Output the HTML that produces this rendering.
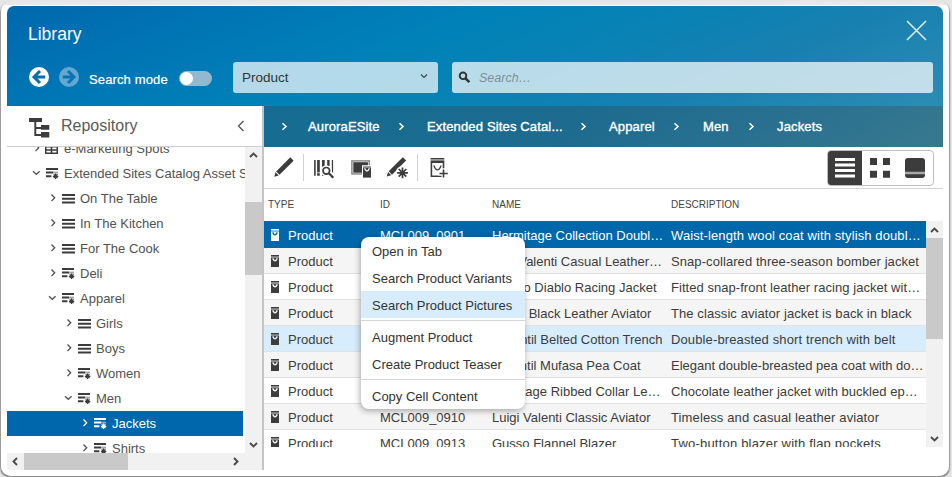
<!DOCTYPE html><html><head><meta charset="utf-8"><style>
*{margin:0;padding:0;box-sizing:border-box}
html,body{width:952px;height:477px;overflow:hidden;background:#e6e6e6;font-family:"Liberation Sans",sans-serif}
.abs{position:absolute}
.t{position:absolute;white-space:nowrap;line-height:1}
#win{position:absolute;left:1px;top:1px;width:948px;height:475px;background:linear-gradient(#e6e6e6 0,#e9e9e9 3.5px,#fcfcfc 4.5px,#fff 5px);border-radius:10px;box-shadow:0 1.5px 1.5px 0.5px rgba(0,0,0,.4)}
#hdr{position:absolute;left:7px;top:6px;width:936px;height:100px;border-radius:7px 7px 0 0;background:linear-gradient(158deg,#0068ad 0%,#0076b5 22%,#0082b8 42%,#0a82b4 60%,#1880b0 76%,#2c8db3 100%);overflow:hidden}
#left{position:absolute;left:7px;top:106px;width:256px;height:364px;background:#fff;overflow:hidden}
#tree{position:absolute;left:0;top:41px;width:238px;height:306px;overflow:hidden}
#right{position:absolute;left:262px;top:106px;width:681px;height:364px;background:#fff;overflow:hidden;border-left:2px solid #c4c4c4}
.tr{position:absolute;left:0;width:236px;height:25px;color:#525252;font-size:13px}
.tr .t{top:6px}
.row{position:absolute;left:0;width:662px;height:26px;font-size:13px;color:#333;border-bottom:1px solid #e2e2e2}
.row .t{top:8px}
.crumb{position:absolute;top:14px;font-size:13px;color:#fff;-webkit-text-stroke:0.35px #fff;letter-spacing:0.15px;white-space:nowrap;line-height:1}
.menu{position:absolute;left:361px;top:237px;width:164px;height:172px;background:#fff;border-radius:8px;box-shadow:-1px 2px 6px rgba(0,0,0,.32)}
.mi{position:absolute;left:11px;font-size:13px;color:#333;white-space:nowrap;line-height:1}
</style></head><body>
<div id="win"></div>
<div id="hdr">
<div class="t" style="left:21px;top:20px;font-size:17.5px;color:#fff">Library</div>
<svg class="abs" style="left:899px;top:14px" width="21" height="21" viewBox="0 0 21 21"><path d="M1 1L20 20M20 1L1 20" stroke="#dcebf3" stroke-width="1.6"/></svg>
<svg class="abs" style="left:22px;top:61px" width="20" height="20" viewBox="0 0 20 20"><circle cx="10" cy="10" r="10" fill="#fff"/><path d="M11 4L5 10L11 16M5.5 10H16.2" stroke="#0a6dae" stroke-width="3" fill="none"/></svg>
<svg class="abs" style="left:52px;top:61px" width="20" height="20" viewBox="0 0 20 20"><circle cx="10" cy="10" r="10" fill="#62a8d2"/><path d="M9 4L15 10L9 16M14.5 10H3.8" stroke="#0a74b3" stroke-width="3" fill="none"/></svg>
<div class="t" style="left:82px;top:67px;font-size:13px;letter-spacing:0.13px;color:#fff;-webkit-text-stroke:0.2px #fff">Search mode</div>
<div class="abs" style="left:172px;top:65px;width:33px;height:15px;border-radius:8px;background:#92b9cf"></div>
<div class="abs" style="left:173px;top:66px;width:13px;height:13px;border-radius:7px;background:#fff"></div>
<div class="abs" style="left:226px;top:56px;width:205px;height:31px;border-radius:3px;background:rgba(255,255,255,.70)"></div>
<div class="t" style="left:235px;top:65px;font-size:13.5px;color:#333">Product</div>
<svg class="abs" style="left:413px;top:67px" width="8" height="6" viewBox="0 0 8 6"><path d="M1 1.5L4 4.5L7 1.5" stroke="#444" stroke-width="1.2" fill="none"/></svg>
<div class="abs" style="left:445px;top:56px;width:481px;height:31px;border-radius:3px;background:rgba(255,255,255,.72)"></div>
<svg class="abs" style="left:451px;top:65px" width="13" height="13" viewBox="0 0 13 13"><circle cx="5" cy="4.8" r="3.3" stroke="#333" stroke-width="1.9" fill="none"/><path d="M7.5 7.3L11.3 11.1" stroke="#333" stroke-width="2.6"/></svg>
<div class="t" style="left:472px;top:66px;font-size:12.5px;color:#7f8f98;font-style:italic">Search…</div>
</div>
<div id="left">
<svg class="abs" style="left:22px;top:12px" width="21" height="21" viewBox="0 0 21 21">
<path d="M0 0h13v4H0z" fill="#3c3c3c"/><path d="M6.3 4v13h7M6.3 10h7" stroke="#3c3c3c" stroke-width="1.9" fill="none"/>
<path d="M12 7h8.3v4.8h-8.3zM12 14h8.3v5.6h-8.3z" fill="#3c3c3c"/></svg>
<div class="t" style="left:54px;top:12px;font-size:16px;color:#5a5a5a">Repository</div>
<svg class="abs" style="left:230px;top:14px" width="8" height="12" viewBox="0 0 8 12"><path d="M6.5 1L1.5 6L6.5 11" stroke="#555" stroke-width="1.3" fill="none"/></svg>
<div class="abs" style="left:0;top:40px;width:256px;height:1px;background:#cfcfcf"></div>
<div id="tree">
<div class="tr" style="top:-11px;color:#525252">
<svg class="abs" style="left:27px;top:7px" width="7" height="10" viewBox="0 0 7 10"><path d="M1.5 1.5L4.7 4.8L1.5 8.1" stroke="#505050" stroke-width="1.3" fill="none"/></svg>
<svg class="abs" style="left:38px;top:8px" width="13" height="10" viewBox="0 0 13 10"><path d="M0 0h13v10H0z" fill="#3c3c3c"/><path d="M1.5 3.5h4.2v1.7H1.5zM7.3 3.5h4.2v1.7H7.3zM1.5 6.8h4.2v1.7H1.5zM7.3 6.8h4.2v1.7H7.3z" fill="#fff"/></svg>
<div class="t" style="left:57px">e-Marketing Spots</div>
</div>
<div class="tr" style="top:14px;color:#525252">
<svg class="abs" style="left:25px;top:9px" width="9" height="6" viewBox="0 0 9 6"><path d="M1 1.3L4.3 4.3L7.6 1.3" stroke="#505050" stroke-width="1.25" fill="none"/></svg>
<svg class="abs" style="left:39px;top:6px" width="14" height="13" viewBox="0 0 14 13"><path d="M0 1h12v2H0zM0 4.6h7v2H0zM0 8.2h5.4v2H0z" fill="#3c3c3c"/><path d="M7 4.6h5v2H7z" fill="#3c3c3c" opacity=".45"/><path d="M9.6 6.6v5.4M6.9 9.3h5.4M7.7 7.4l3.8 3.8M11.5 7.4l-3.8 3.8" stroke="#3c3c3c" stroke-width="1.2"/><circle cx="9.6" cy="9.3" r="1.6" fill="#3c3c3c"/></svg>
<div class="t" style="left:57px">Extended Sites Catalog Asset Store</div>
</div>
<div class="tr" style="top:39px;color:#525252">
<svg class="abs" style="left:43px;top:7px" width="7" height="10" viewBox="0 0 7 10"><path d="M1.5 1.5L4.7 4.8L1.5 8.1" stroke="#505050" stroke-width="1.3" fill="none"/></svg>
<svg class="abs" style="left:55px;top:8px" width="13" height="10" viewBox="0 0 13 10"><path d="M0 0h13v2H0zM0 3.7h13v2H0zM0 7.4h13v2H0z" fill="#3c3c3c"/></svg>
<div class="t" style="left:73px">On The Table</div>
</div>
<div class="tr" style="top:64px;color:#525252">
<svg class="abs" style="left:43px;top:7px" width="7" height="10" viewBox="0 0 7 10"><path d="M1.5 1.5L4.7 4.8L1.5 8.1" stroke="#505050" stroke-width="1.3" fill="none"/></svg>
<svg class="abs" style="left:55px;top:8px" width="13" height="10" viewBox="0 0 13 10"><path d="M0 0h13v2H0zM0 3.7h13v2H0zM0 7.4h13v2H0z" fill="#3c3c3c"/></svg>
<div class="t" style="left:73px">In The Kitchen</div>
</div>
<div class="tr" style="top:89px;color:#525252">
<svg class="abs" style="left:43px;top:7px" width="7" height="10" viewBox="0 0 7 10"><path d="M1.5 1.5L4.7 4.8L1.5 8.1" stroke="#505050" stroke-width="1.3" fill="none"/></svg>
<svg class="abs" style="left:55px;top:8px" width="13" height="10" viewBox="0 0 13 10"><path d="M0 0h13v2H0zM0 3.7h13v2H0zM0 7.4h13v2H0z" fill="#3c3c3c"/></svg>
<div class="t" style="left:73px">For The Cook</div>
</div>
<div class="tr" style="top:114px;color:#525252">
<svg class="abs" style="left:43px;top:7px" width="7" height="10" viewBox="0 0 7 10"><path d="M1.5 1.5L4.7 4.8L1.5 8.1" stroke="#505050" stroke-width="1.3" fill="none"/></svg>
<svg class="abs" style="left:55px;top:6px" width="14" height="13" viewBox="0 0 14 13"><path d="M0 1h12v2H0zM0 4.6h7v2H0zM0 8.2h5.4v2H0z" fill="#3c3c3c"/><path d="M7 4.6h5v2H7z" fill="#3c3c3c" opacity=".45"/><path d="M9.6 6.6v5.4M6.9 9.3h5.4M7.7 7.4l3.8 3.8M11.5 7.4l-3.8 3.8" stroke="#3c3c3c" stroke-width="1.2"/><circle cx="9.6" cy="9.3" r="1.6" fill="#3c3c3c"/></svg>
<div class="t" style="left:73px">Deli</div>
</div>
<div class="tr" style="top:139px;color:#525252">
<svg class="abs" style="left:41px;top:9px" width="9" height="6" viewBox="0 0 9 6"><path d="M1 1.3L4.3 4.3L7.6 1.3" stroke="#505050" stroke-width="1.25" fill="none"/></svg>
<svg class="abs" style="left:55px;top:6px" width="14" height="13" viewBox="0 0 14 13"><path d="M0 1h12v2H0zM0 4.6h7v2H0zM0 8.2h5.4v2H0z" fill="#3c3c3c"/><path d="M7 4.6h5v2H7z" fill="#3c3c3c" opacity=".45"/><path d="M9.6 6.6v5.4M6.9 9.3h5.4M7.7 7.4l3.8 3.8M11.5 7.4l-3.8 3.8" stroke="#3c3c3c" stroke-width="1.2"/><circle cx="9.6" cy="9.3" r="1.6" fill="#3c3c3c"/></svg>
<div class="t" style="left:73px">Apparel</div>
</div>
<div class="tr" style="top:164px;color:#525252">
<svg class="abs" style="left:59px;top:7px" width="7" height="10" viewBox="0 0 7 10"><path d="M1.5 1.5L4.7 4.8L1.5 8.1" stroke="#505050" stroke-width="1.3" fill="none"/></svg>
<svg class="abs" style="left:71px;top:8px" width="13" height="10" viewBox="0 0 13 10"><path d="M0 0h13v2H0zM0 3.7h13v2H0zM0 7.4h13v2H0z" fill="#3c3c3c"/></svg>
<div class="t" style="left:89px">Girls</div>
</div>
<div class="tr" style="top:189px;color:#525252">
<svg class="abs" style="left:59px;top:7px" width="7" height="10" viewBox="0 0 7 10"><path d="M1.5 1.5L4.7 4.8L1.5 8.1" stroke="#505050" stroke-width="1.3" fill="none"/></svg>
<svg class="abs" style="left:71px;top:8px" width="13" height="10" viewBox="0 0 13 10"><path d="M0 0h13v2H0zM0 3.7h13v2H0zM0 7.4h13v2H0z" fill="#3c3c3c"/></svg>
<div class="t" style="left:89px">Boys</div>
</div>
<div class="tr" style="top:214px;color:#525252">
<svg class="abs" style="left:59px;top:7px" width="7" height="10" viewBox="0 0 7 10"><path d="M1.5 1.5L4.7 4.8L1.5 8.1" stroke="#505050" stroke-width="1.3" fill="none"/></svg>
<svg class="abs" style="left:71px;top:6px" width="14" height="13" viewBox="0 0 14 13"><path d="M0 1h12v2H0zM0 4.6h7v2H0zM0 8.2h5.4v2H0z" fill="#3c3c3c"/><path d="M7 4.6h5v2H7z" fill="#3c3c3c" opacity=".45"/><path d="M9.6 6.6v5.4M6.9 9.3h5.4M7.7 7.4l3.8 3.8M11.5 7.4l-3.8 3.8" stroke="#3c3c3c" stroke-width="1.2"/><circle cx="9.6" cy="9.3" r="1.6" fill="#3c3c3c"/></svg>
<div class="t" style="left:89px">Women</div>
</div>
<div class="tr" style="top:239px;color:#525252">
<svg class="abs" style="left:57px;top:9px" width="9" height="6" viewBox="0 0 9 6"><path d="M1 1.3L4.3 4.3L7.6 1.3" stroke="#505050" stroke-width="1.25" fill="none"/></svg>
<svg class="abs" style="left:71px;top:6px" width="14" height="13" viewBox="0 0 14 13"><path d="M0 1h12v2H0zM0 4.6h7v2H0zM0 8.2h5.4v2H0z" fill="#3c3c3c"/><path d="M7 4.6h5v2H7z" fill="#3c3c3c" opacity=".45"/><path d="M9.6 6.6v5.4M6.9 9.3h5.4M7.7 7.4l3.8 3.8M11.5 7.4l-3.8 3.8" stroke="#3c3c3c" stroke-width="1.2"/><circle cx="9.6" cy="9.3" r="1.6" fill="#3c3c3c"/></svg>
<div class="t" style="left:89px">Men</div>
</div>
<div class="tr" style="top:264px;background:#0067ad;color:#fff">
<svg class="abs" style="left:75px;top:7px" width="7" height="10" viewBox="0 0 7 10"><path d="M1.5 1.5L4.7 4.8L1.5 8.1" stroke="#fff" stroke-width="1.3" fill="none"/></svg>
<svg class="abs" style="left:87px;top:6px" width="14" height="13" viewBox="0 0 14 13"><path d="M0 1h12v2H0zM0 4.6h7v2H0zM0 8.2h5.4v2H0z" fill="#fff"/><path d="M7 4.6h5v2H7z" fill="#fff" opacity=".45"/><path d="M9.6 6.6v5.4M6.9 9.3h5.4M7.7 7.4l3.8 3.8M11.5 7.4l-3.8 3.8" stroke="#fff" stroke-width="1.2"/><circle cx="9.6" cy="9.3" r="1.6" fill="#fff"/></svg>
<div class="t" style="left:105px">Jackets</div>
</div>
<div class="tr" style="top:289px;color:#525252">
<svg class="abs" style="left:75px;top:7px" width="7" height="10" viewBox="0 0 7 10"><path d="M1.5 1.5L4.7 4.8L1.5 8.1" stroke="#505050" stroke-width="1.3" fill="none"/></svg>
<svg class="abs" style="left:87px;top:6px" width="14" height="13" viewBox="0 0 14 13"><path d="M0 1h12v2H0zM0 4.6h7v2H0zM0 8.2h5.4v2H0z" fill="#3c3c3c"/><path d="M7 4.6h5v2H7z" fill="#3c3c3c" opacity=".45"/><path d="M9.6 6.6v5.4M6.9 9.3h5.4M7.7 7.4l3.8 3.8M11.5 7.4l-3.8 3.8" stroke="#3c3c3c" stroke-width="1.2"/><circle cx="9.6" cy="9.3" r="1.6" fill="#3c3c3c"/></svg>
<div class="t" style="left:105px">Shirts</div>
</div>
</div>
<div class="abs" style="left:238px;top:41px;width:17px;height:323px;background:#f1f1f1"></div>
<div class="abs" style="left:238px;top:96px;width:17px;height:73px;background:#c9c9c9"></div>
<svg class="abs" style="left:242px;top:46px" width="9" height="6" viewBox="0 0 9 6"><path d="M1 5L4.5 1.5L8 5" stroke="#4a4a4a" stroke-width="1.9" fill="none"/></svg>
<svg class="abs" style="left:242px;top:336px" width="9" height="6" viewBox="0 0 9 6"><path d="M1 1L4.5 4.5L8 1" stroke="#4a4a4a" stroke-width="1.9" fill="none"/></svg>
<div class="abs" style="left:0;top:347px;width:238px;height:17px;background:#f1f1f1;border-bottom-left-radius:3px"></div>
<div class="abs" style="left:17px;top:347px;width:104px;height:17px;background:#c9c9c9"></div>
<svg class="abs" style="left:5px;top:351px" width="6" height="9" viewBox="0 0 6 9"><path d="M5 1L1.5 4.5L5 8" stroke="#4a4a4a" stroke-width="1.9" fill="none"/></svg>
<svg class="abs" style="left:226px;top:351px" width="6" height="9" viewBox="0 0 6 9"><path d="M1 1L4.5 4.5L1 8" stroke="#4a4a4a" stroke-width="1.9" fill="none"/></svg>
</div>
<div id="right">
<div class="abs" style="left:0;top:0;width:679px;height:41px;background:linear-gradient(150deg,#156c92 0%,#1d6b8f 45%,#2b7190 75%,#37798e 100%)"></div>
<svg class="abs" style="left:17px;top:16px" width="7" height="9" viewBox="0 0 7 9"><path d="M1.5 1.3L5 4.5L1.5 7.7" stroke="#fff" stroke-width="1.5" fill="none"/></svg>
<div class="crumb" style="left:44px">AuroraESite</div>
<svg class="abs" style="left:134px;top:16px" width="7" height="9" viewBox="0 0 7 9"><path d="M1.5 1.3L5 4.5L1.5 7.7" stroke="#fff" stroke-width="1.5" fill="none"/></svg>
<div class="crumb" style="left:163px">Extended Sites Catal...</div>
<svg class="abs" style="left:316px;top:16px" width="7" height="9" viewBox="0 0 7 9"><path d="M1.5 1.3L5 4.5L1.5 7.7" stroke="#fff" stroke-width="1.5" fill="none"/></svg>
<div class="crumb" style="left:345px">Apparel</div>
<svg class="abs" style="left:409px;top:16px" width="7" height="9" viewBox="0 0 7 9"><path d="M1.5 1.3L5 4.5L1.5 7.7" stroke="#fff" stroke-width="1.5" fill="none"/></svg>
<div class="crumb" style="left:439px">Men</div>
<svg class="abs" style="left:484px;top:16px" width="7" height="9" viewBox="0 0 7 9"><path d="M1.5 1.3L5 4.5L1.5 7.7" stroke="#fff" stroke-width="1.5" fill="none"/></svg>
<div class="crumb" style="left:513px">Jackets</div>
<div class="abs" style="left:0;top:82px;width:679px;height:1px;background:#d4d4d4"></div>
<svg class="abs" style="left:0;top:40px" width="679" height="42" viewBox="264 146 679 42">
<g fill="#3c3c3c">
<g transform="translate(274.3,176.7) rotate(-45)"><path d="M0 0L4 -2.3V2.3Z"/><rect x="5" y="-2.35" width="20" height="4.7"/></g>
<rect x="303" y="154" width="1" height="27" fill="#d0d0d0"/>
<rect x="314.1" y="160" width="1.6" height="15.7"/>
<rect x="317.1" y="160" width="2.7" height="12.4"/><rect x="317.1" y="173.2" width="2.7" height="2.5"/>
<rect x="322" y="160" width="2.7" height="15.7"/>
<rect x="327.2" y="160" width="2.4" height="6"/>
<rect x="331.8" y="160" width="1.3" height="12.4"/>
</g>
<circle cx="326.3" cy="170.8" r="5.6" fill="#fff"/>
<path d="M330.3 174.8L334.8 179.3" stroke="#fff" stroke-width="4.2"/>
<circle cx="326.3" cy="170.8" r="3.3" fill="#fff" stroke="#3c3c3c" stroke-width="1.7"/>
<path d="M328.8 173.3L333.3 177.8" stroke="#3c3c3c" stroke-width="2.3"/>
<rect x="351.9" y="160.9" width="17.4" height="13" fill="none" stroke="#8a8a8a" stroke-width="1.5"/>
<rect x="353.3" y="162.2" width="14.6" height="10.5" fill="#3c3c3c"/>
<rect x="362" y="165.2" width="10" height="13.4" fill="#fff"/>
<rect x="363" y="166.2" width="8" height="1.8" fill="#8a8a8a"/>
<rect x="363" y="168" width="8" height="9.6" fill="#3c3c3c"/>
<path d="M364.6 168.3q2.4 5.6 4.8 0" stroke="#fff" stroke-width="1.3" fill="none"/>
<g transform="translate(386.8,176.5) rotate(-45)" fill="#3c3c3c"><path d="M0 0L4 -2.3V2.3Z"/><rect x="5" y="-2.35" width="20" height="4.7"/></g>
<circle cx="402.5" cy="172.8" r="6.8" fill="#fff"/>
<g stroke="#3c3c3c" stroke-width="1.7"><path d="M402.5 167.4v10.8M397.1 172.8h10.8M398.7 169l7.6 7.6M406.3 169l-7.6 7.6"/></g>
<circle cx="402.5" cy="172.8" r="2" fill="#3c3c3c"/>
<rect x="417" y="154" width="1" height="27" fill="#d0d0d0"/>
<rect x="430.6" y="158" width="13.7" height="1.3" fill="#3c3c3c"/>
<rect x="430.6" y="159.3" width="13.7" height="1.5" fill="#8a8a8a"/>
<path d="M430.6 160.8h13.7v16.2h-13.7z M432.2 163v12.4h10.5V163z" fill="#3c3c3c" fill-rule="evenodd"/>
<path d="M433.8 165.4q3.6 9 7.4 0" stroke="#3c3c3c" stroke-width="1.3" fill="none"/>
<path d="M443.5 168.3v10.4M438.3 173.5h10.7" stroke="#fff" stroke-width="4"/>
<path d="M443.5 169.5v8M439.5 173.5h8.3" stroke="#3c3c3c" stroke-width="1.6"/>
</svg>
<div class="abs" style="left:563px;top:44px;width:107px;height:36px;border:1px solid #bdbdbd;border-radius:4px;overflow:hidden">
<div class="abs" style="left:0;top:0;width:34px;height:34px;background:#3c3c3c"></div>
<svg class="abs" style="left:7px;top:7px" width="21" height="21" viewBox="0 0 21 21"><path d="M0 0h20v3H0zM0 5.6h20v3H0zM0 11.1h20v3H0zM0 16.6h20v3H0z" fill="#fff"/></svg>
<svg class="abs" style="left:42px;top:7px" width="21" height="21" viewBox="0 0 21 21"><path d="M0 0h7v7H0zM13 0h7v7h-7zM0 12.8h7v7H0zM13 12.8h7v7h-7z" fill="#3c3c3c"/></svg>
<svg class="abs" style="left:77px;top:7px" width="21" height="21" viewBox="0 0 21 21"><rect x="0" y="0" width="20" height="20" rx="3" fill="#3c3c3c"/><path d="M0 13.8h20v2.4H0z" fill="#a8a8a8"/></svg>
</div>
<div class="t" style="left:4px;top:94px;font-size:10px;color:#444">TYPE</div>
<div class="t" style="left:116px;top:94px;font-size:10px;color:#444">ID</div>
<div class="t" style="left:228px;top:94px;font-size:10px;color:#444">NAME</div>
<div class="t" style="left:407px;top:94px;font-size:10px;color:#444">DESCRIPTION</div>
<div class="abs" style="left:0;top:115px;width:662px;height:226px;overflow:hidden">
<div class="row" style="top:0px;height:27px;background:#0067ab;color:#fff;border-bottom-color:transparent;">
<svg class="abs" style="left:7px;top:8px" width="8" height="12" viewBox="0 0 8 12"><path d="M0 0h8v1.5H0z" fill="#fff"/><path d="M0 1.5h8v1.5H0z" fill="#fff" opacity=".55"/><path d="M0 3h8v9H0z" fill="#fff"/><path d="M1.7 3.4q2.3 5 4.6 0" stroke="#0067ab" stroke-width="1.4" fill="none"/></svg>
<div class="t" style="top:8px;left:24px">Product</div>
<div class="t" style="top:8px;left:116px">MCL009_0901</div>
<div class="t" style="top:8px;left:228px">Hermitage Collection Doubl…</div>
<div class="t" style="top:8px;left:407px;letter-spacing:0.11px">Waist-length wool coat with stylish doubl…</div>
</div>
<div class="row" style="top:27px;height:26px;background:#f5f5f5;color:#3c3c3c;">
<svg class="abs" style="left:7px;top:7px" width="8" height="12" viewBox="0 0 8 12"><path d="M0 0h8v1.5H0z" fill="#3c3c3c"/><path d="M0 1.5h8v1.5H0z" fill="#3c3c3c" opacity=".55"/><path d="M0 3h8v9H0z" fill="#3c3c3c"/><path d="M1.7 3.4q2.3 5 4.6 0" stroke="#f5f5f5" stroke-width="1.4" fill="none"/></svg>
<div class="t" style="top:7px;left:24px">Product</div>
<div class="t" style="top:7px;left:116px">MCL009_0902</div>
<div class="t" style="top:7px;right:264.0px;text-align:right">Luigi Valenti Casual Leather…</div>
<div class="t" style="top:7px;left:407px;letter-spacing:0.077px">Snap-collared three-season bomber jacket</div>
</div>
<div class="row" style="top:53px;height:26px;background:#fff;color:#3c3c3c;">
<svg class="abs" style="left:7px;top:7px" width="8" height="12" viewBox="0 0 8 12"><path d="M0 0h8v1.5H0z" fill="#3c3c3c"/><path d="M0 1.5h8v1.5H0z" fill="#3c3c3c" opacity=".55"/><path d="M0 3h8v9H0z" fill="#3c3c3c"/><path d="M1.7 3.4q2.3 5 4.6 0" stroke="#fff" stroke-width="1.4" fill="none"/></svg>
<div class="t" style="top:7px;left:24px">Product</div>
<div class="t" style="top:7px;left:116px">MCL009_0903</div>
<div class="t" style="top:7px;right:269.5px;text-align:right">Gusso Diablo Racing Jacket</div>
<div class="t" style="top:7px;left:407px;letter-spacing:0.047px">Fitted snap-front leather racing jacket wit…</div>
</div>
<div class="row" style="top:79px;height:26px;background:#f5f5f5;color:#3c3c3c;">
<svg class="abs" style="left:7px;top:7px" width="8" height="12" viewBox="0 0 8 12"><path d="M0 0h8v1.5H0z" fill="#3c3c3c"/><path d="M0 1.5h8v1.5H0z" fill="#3c3c3c" opacity=".55"/><path d="M0 3h8v9H0z" fill="#3c3c3c"/><path d="M1.7 3.4q2.3 5 4.6 0" stroke="#f5f5f5" stroke-width="1.4" fill="none"/></svg>
<div class="t" style="top:7px;left:24px">Product</div>
<div class="t" style="top:7px;left:116px">MCL009_0904</div>
<div class="t" style="top:7px;right:274.70000000000005px;text-align:right">Gusso Black Leather Aviator</div>
<div class="t" style="top:7px;left:407px;letter-spacing:0.083px">The classic aviator jacket is back in black</div>
</div>
<div class="row" style="top:105px;height:26px;background:#d7edfe;color:#3c3c3c;">
<svg class="abs" style="left:7px;top:7px" width="8" height="12" viewBox="0 0 8 12"><path d="M0 0h8v1.5H0z" fill="#3c3c3c"/><path d="M0 1.5h8v1.5H0z" fill="#3c3c3c" opacity=".55"/><path d="M0 3h8v9H0z" fill="#3c3c3c"/><path d="M1.7 3.4q2.3 5 4.6 0" stroke="#d7edfe" stroke-width="1.4" fill="none"/></svg>
<div class="t" style="top:7px;left:24px">Product</div>
<div class="t" style="top:7px;left:116px">MCL009_0905</div>
<div class="t" style="top:7px;right:263.5px;text-align:right">Luigi Valentil Belted Cotton Trench</div>
<div class="t" style="top:7px;left:407px;letter-spacing:0.124px">Double-breasted short trench with belt</div>
</div>
<div class="row" style="top:131px;height:26px;background:#f5f5f5;color:#3c3c3c;">
<svg class="abs" style="left:7px;top:7px" width="8" height="12" viewBox="0 0 8 12"><path d="M0 0h8v1.5H0z" fill="#3c3c3c"/><path d="M0 1.5h8v1.5H0z" fill="#3c3c3c" opacity=".55"/><path d="M0 3h8v9H0z" fill="#3c3c3c"/><path d="M1.7 3.4q2.3 5 4.6 0" stroke="#f5f5f5" stroke-width="1.4" fill="none"/></svg>
<div class="t" style="top:7px;left:24px">Product</div>
<div class="t" style="top:7px;left:116px">MCL009_0906</div>
<div class="t" style="top:7px;right:285.5px;text-align:right">Luigi Valentil Mufasa Pea Coat</div>
<div class="t" style="top:7px;left:407px;letter-spacing:-0.01px">Elegant double-breasted pea coat with do…</div>
</div>
<div class="row" style="top:157px;height:26px;background:#fff;color:#3c3c3c;">
<svg class="abs" style="left:7px;top:7px" width="8" height="12" viewBox="0 0 8 12"><path d="M0 0h8v1.5H0z" fill="#3c3c3c"/><path d="M0 1.5h8v1.5H0z" fill="#3c3c3c" opacity=".55"/><path d="M0 3h8v9H0z" fill="#3c3c3c"/><path d="M1.7 3.4q2.3 5 4.6 0" stroke="#fff" stroke-width="1.4" fill="none"/></svg>
<div class="t" style="top:7px;left:24px">Product</div>
<div class="t" style="top:7px;left:116px">MCL009_0907</div>
<div class="t" style="top:7px;right:265.5px;text-align:right">Hermitage Ribbed Collar Le…</div>
<div class="t" style="top:7px;left:407px;letter-spacing:0.025px">Chocolate leather jacket with buckled ep…</div>
</div>
<div class="row" style="top:183px;height:26px;background:#f5f5f5;color:#3c3c3c;">
<svg class="abs" style="left:7px;top:7px" width="8" height="12" viewBox="0 0 8 12"><path d="M0 0h8v1.5H0z" fill="#3c3c3c"/><path d="M0 1.5h8v1.5H0z" fill="#3c3c3c" opacity=".55"/><path d="M0 3h8v9H0z" fill="#3c3c3c"/><path d="M1.7 3.4q2.3 5 4.6 0" stroke="#f5f5f5" stroke-width="1.4" fill="none"/></svg>
<div class="t" style="top:7px;left:24px">Product</div>
<div class="t" style="top:7px;left:116px">MCL009_0910</div>
<div class="t" style="top:7px;left:228px">Luigi Valenti Classic Aviator</div>
<div class="t" style="top:7px;left:407px;letter-spacing:0.118px">Timeless and casual leather aviator</div>
</div>
<div class="row" style="top:209px;height:26px;background:#fff;color:#3c3c3c;">
<svg class="abs" style="left:7px;top:7px" width="8" height="12" viewBox="0 0 8 12"><path d="M0 0h8v1.5H0z" fill="#3c3c3c"/><path d="M0 1.5h8v1.5H0z" fill="#3c3c3c" opacity=".55"/><path d="M0 3h8v9H0z" fill="#3c3c3c"/><path d="M1.7 3.4q2.3 5 4.6 0" stroke="#fff" stroke-width="1.4" fill="none"/></svg>
<div class="t" style="top:7px;left:24px">Product</div>
<div class="t" style="top:7px;left:116px">MCL009_0913</div>
<div class="t" style="top:7px;left:228px">Gusso Flannel Blazer</div>
<div class="t" style="top:7px;left:407px;letter-spacing:0.2px">Two-button blazer with flap pockets</div>
</div>
</div>
<div class="abs" style="left:662px;top:115px;width:17px;height:226px;background:#f1f1f1"></div>
<div class="abs" style="left:662px;top:132px;width:17px;height:101px;background:#c9c9c9"></div>
<svg class="abs" style="left:666px;top:121px" width="9" height="6" viewBox="0 0 9 6"><path d="M1 5L4.5 1.5L8 5" stroke="#4a4a4a" stroke-width="1.9" fill="none"/></svg>
<svg class="abs" style="left:666px;top:330px" width="9" height="6" viewBox="0 0 9 6"><path d="M1 1L4.5 4.5L8 1" stroke="#4a4a4a" stroke-width="1.9" fill="none"/></svg>
</div>
<div class="menu">
<div class="mi" style="top:8px">Open in Tab</div>
<div class="mi" style="top:35px">Search Product Variants</div>
<div class="abs" style="left:0;top:54px;width:164px;height:27px;background:#d7edfe"></div>
<div class="mi" style="top:62px">Search Product Pictures</div>
<div class="mi" style="top:94px">Augment Product</div>
<div class="mi" style="top:121px">Create Product Teaser</div>
<div class="mi" style="top:153px">Copy Cell Content</div>
<div class="abs" style="left:0;top:83px;width:164px;height:1px;background:#d6d6d6"></div>
<div class="abs" style="left:0;top:142px;width:164px;height:1px;background:#d6d6d6"></div>
</div>
</body></html>
